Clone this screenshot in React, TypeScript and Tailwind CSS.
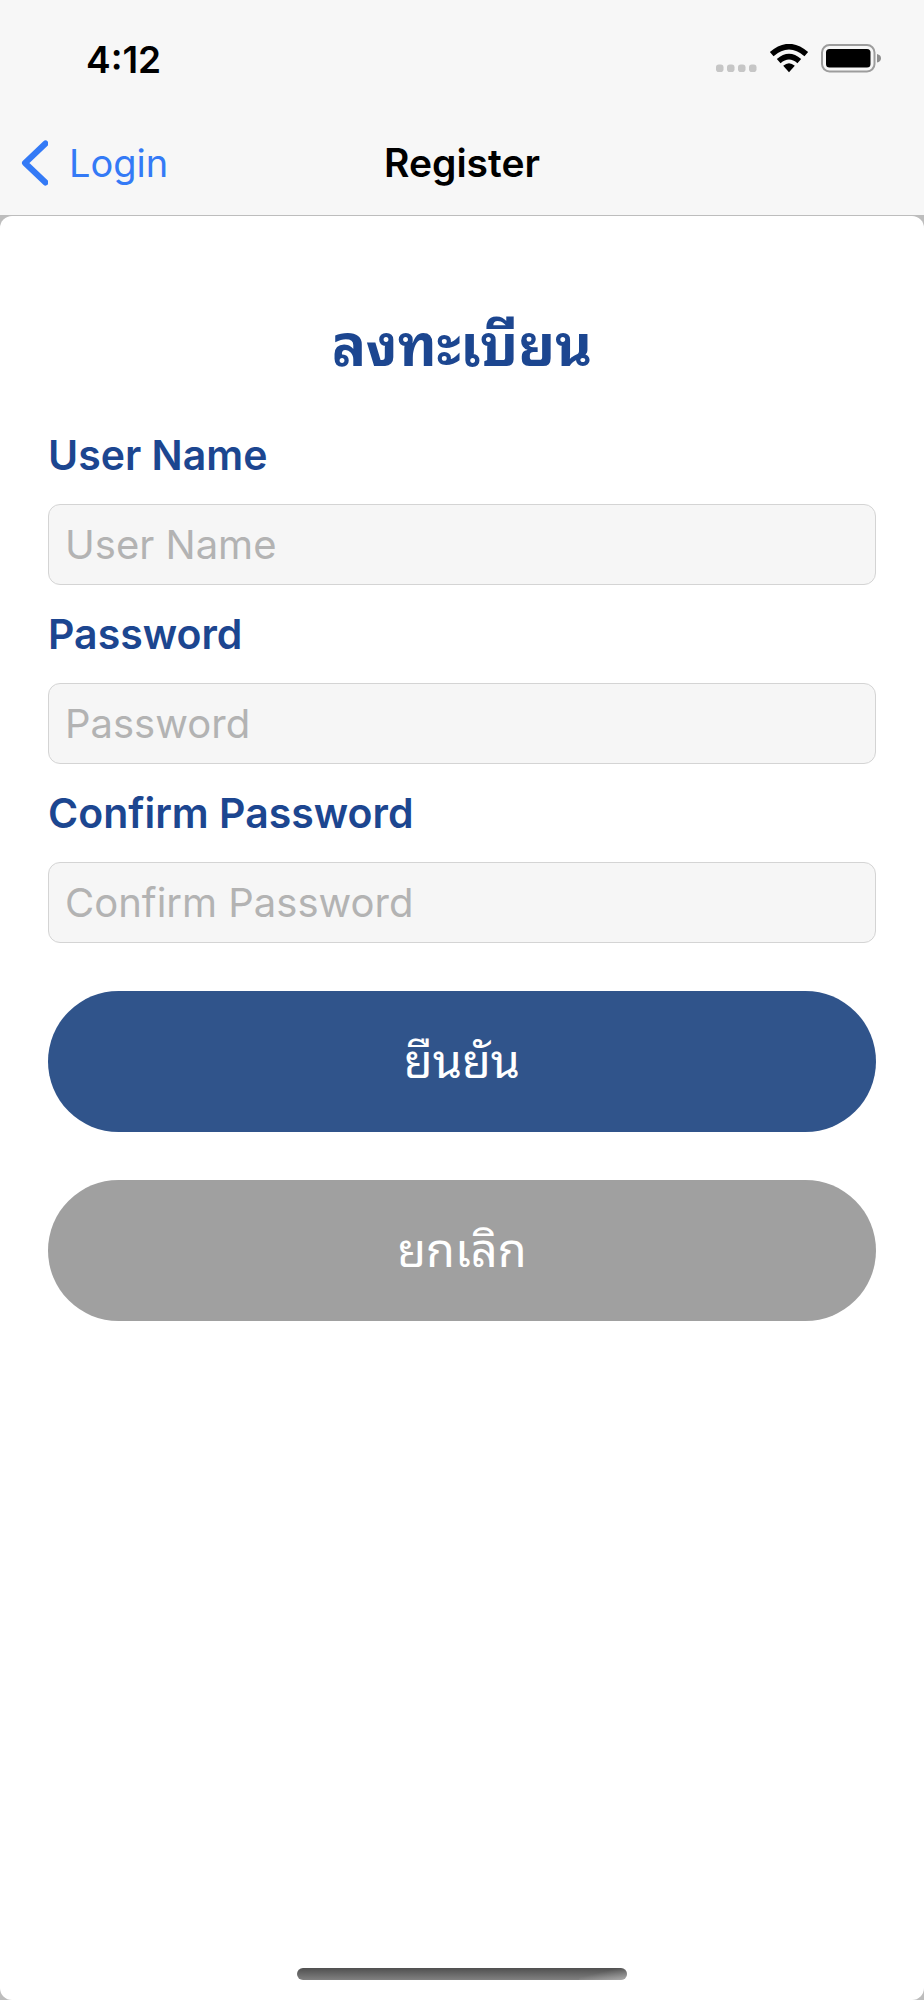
import React from "react";

type FieldProps = { id: string; label: string; type: string };

function Field({ id, label, type }: FieldProps) {
  return (
    <div className="flex flex-col gap-6">
      <label htmlFor={id} className="text-[41px] leading-[50px] font-semibold text-[#1c4690]">
        {label}
      </label>
      <input
        id={id}
        type={type}
        placeholder={label}
        className="h-[81px] w-full rounded-xl border border-[#d4d4d4] bg-[#f6f6f6] px-4 text-[40px] text-black outline-none placeholder:text-[#b3b3b3]"
      />
    </div>
  );
}

function StatusBar() {
  return (
    <div className="flex h-[118px] items-center justify-between pr-[43px] pl-[86px]">
      <time className="text-[37px] leading-none font-semibold text-black">4:12</time>
      <div className="flex items-center">
        <svg className="h-[30px] w-[42px]" viewBox="0 0 42 30" fill="#c6c6c6" aria-hidden="true">
          <rect x="0" y="20.5" width="7.5" height="7.5" rx="2.8" />
          <rect x="11" y="20.5" width="7.5" height="7.5" rx="2.8" />
          <rect x="22" y="20.5" width="7.5" height="7.5" rx="2.8" />
          <rect x="33" y="20.5" width="7.5" height="7.5" rx="2.8" />
        </svg>
        <svg className="ml-[11px] h-[30px] w-10" viewBox="0 0 40 30" aria-hidden="true">
          <path d="M2.7 10.2Q20-4.8 37.3 10.2M9.7 17.2Q20 8 30.3 17.2" fill="none" stroke="#000" strokeWidth="5.6" />
          <path d="M14.2 21.8Q20 16.6 25.8 21.8L20 28.2Z" fill="#000" />
        </svg>
        <svg className="ml-3 h-[30px] w-[60px]" viewBox="0 0 60 30" aria-hidden="true">
          <rect x="1" y="1" width="52.5" height="26.5" rx="7.5" fill="none" stroke="#9d9d9d" strokeWidth="2" />
          <rect x="5" y="5" width="44.5" height="18.5" rx="3.5" fill="#000" />
          <path d="M56 10Q60 11 60 14.3T56 18.6Z" fill="#8f8f8f" />
        </svg>
      </div>
    </div>
  );
}

export default function App() {
  return (
    <div className="flex min-h-screen flex-col bg-[#bdbdbd] font-['Inter','Noto_Sans_Thai_Looped','Noto_Sans_Thai',sans-serif]">
      <header className="border-b border-[#bdbdbd] bg-[#f7f7f7]">
        <StatusBar />
        <nav className="grid h-[97px] grid-cols-[1fr_auto_1fr] items-center px-5 pb-2">
          <a href="#login" className="flex items-center gap-[21px] text-[38px] leading-[48px] text-[#347af6]">
            <svg className="h-[46px] w-7" viewBox="0 0 28 46" fill="none" aria-hidden="true">
              <path d="M25.5 3.5L5 23L25.5 42.5" stroke="currentColor" strokeWidth="6" strokeLinecap="round" strokeLinejoin="round" />
            </svg>
            Login
          </a>
          <h1 className="text-[39px] leading-[48px] font-semibold text-black">Register</h1>
        </nav>
      </header>

      <main className="flex flex-1 flex-col rounded-xl bg-white px-12 pt-24 pb-5">
        <h2 className="text-center text-[57px] leading-[68px] font-bold text-[#1c4690]">ลงทะเบียน</h2>
        <form className="mt-[50px] flex flex-col gap-12" onSubmit={(e) => e.preventDefault()}>
          <div className="flex flex-col gap-6">
            <Field id="username" label="User Name" type="text" />
            <Field id="password" label="Password" type="password" />
            <Field id="confirm" label="Confirm Password" type="password" />
          </div>
          <button type="submit" className="h-[141px] rounded-full bg-[#30548b] text-[47px] text-white">
            ยืนยัน
          </button>
          <button type="button" className="h-[141px] rounded-full bg-[#a0a0a0] text-[47px] text-white">
            ยกเลิก
          </button>
        </form>
        <div className="mx-auto mt-auto h-3 w-[330px] rounded-full bg-linear-to-b from-[#505050] to-[#818181]">
          <div className="ml-auto h-full w-12 rounded-r-full bg-linear-to-br from-transparent from-40% to-white/35" />
        </div>
      </main>
    </div>
  );
}
